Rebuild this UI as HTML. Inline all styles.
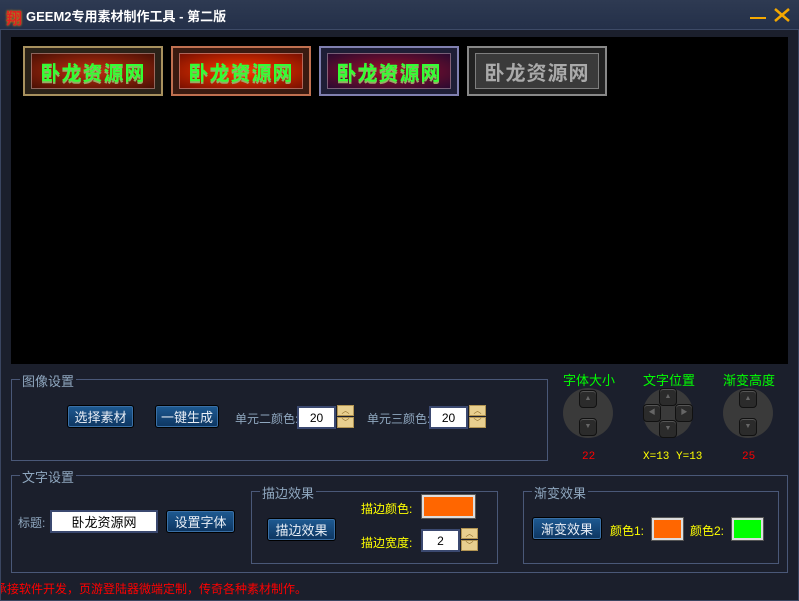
<!DOCTYPE html>
<html><head><meta charset="utf-8">
<style>
*{margin:0;padding:0;box-sizing:border-box}
body{width:799px;height:601px;overflow:hidden;background:#1b1f2c;font-family:"Liberation Sans","Noto Sans CJK SC","WenQuanYi Zen Hei",sans-serif;position:relative;font-size:12px}
.a{position:absolute}
#title{left:0;top:0;width:799px;height:30px;background:linear-gradient(#2e3a52,#243049);border-bottom:1px solid #3d4a66}
#frame{left:0;top:30px;width:799px;height:571px;border:1px solid #3a4560;border-top:none;background:#1b1f2c}
#canvas{left:11px;top:37px;width:777px;height:327px;background:#000}
.bn{width:140px;height:50px;border:2px solid;padding:5px 6px;}
.bn div{width:100%;height:100%;border:1px solid rgba(255,255,255,.35);display:flex;align-items:center;justify-content:center;font-size:20px;font-weight:bold;letter-spacing:1px}
.grp{border:1px solid #4a5878}
.lg{position:absolute;top:-9px;left:8px;background:#1b1f2c;color:#8fa7bf;padding:0 2px;font-size:13px}
.btn{height:23px;border:1px solid #000;border-radius:3px;background:linear-gradient(#1e5a92,#0d3560);color:#e8eef6;font-size:13px;display:flex;align-items:center;justify-content:center;box-shadow:inset 0 0 0 1px #3a6fa5}
.lbl{color:#8fa7bf;font-size:12px;white-space:nowrap}
.yl{color:#ffff00;font-size:12px;white-space:nowrap}
.inp{background:#fff;border:2px solid #3b4970;height:23px;display:flex;align-items:center;justify-content:center;color:#000;font-size:12px}
.sp{width:17px;height:23px}
.sp i{display:block;width:17px;height:11px;background:#e8cf8f;border:1px solid #b29452;margin-bottom:1px;color:#8b6a2a;font-size:8px;text-align:center;line-height:9px;font-style:normal}
.sw{border:2px solid #ddd;box-shadow:0 0 0 1px #555}
.dial{width:50px;height:50px;border-radius:50%;background:#3a3a3a}
.k{position:absolute;width:18px;height:18px;background:#2b2b2b;border:1px solid #111;border-radius:4px;box-shadow:inset 0 1px 0 #555;color:#666;font-size:7px;text-align:center;line-height:16px}
.gl{color:#00ff00;font-size:13px}
</style></head><body>
<div id="title" class="a">
 <div class="a" style="left:6px;top:5px;color:#d22;font-size:16px;font-weight:bold;text-shadow:0 0 2px #fa0">翔</div>
 <div class="a" style="left:26px;top:6px;color:#fff;font-size:13px;font-weight:bold">GEEM2专用素材制作工具 - 第二版</div>
 <div class="a" style="left:750px;top:17px;width:16px;height:2px;background:#f5a800"></div>
 <svg class="a" style="left:773px;top:7px" width="18" height="16"><path d="M2 2L16 14M16 2L2 14" stroke="#f5a800" stroke-width="2.5"/></svg>
</div>
<div id="frame" class="a"></div>
<div id="canvas" class="a"></div>
<div class="a bn" style="left:23px;top:46px;border-color:#a8915e;background:#2a2218"><div style="background:radial-gradient(#c03010,#4a1004);color:#3f3;text-shadow:0 2px 0 #9a6">卧龙资源网</div></div>
<div class="a bn" style="left:171px;top:46px;border-color:#c07050;background:#3a1a10"><div style="background:radial-gradient(#ff3a00,#7a1000);color:#3f3;text-shadow:0 2px 0 #9a6">卧龙资源网</div></div>
<div class="a bn" style="left:319px;top:46px;border-color:#8080b0;background:#1e1e36"><div style="background:radial-gradient(#a0102a,#2a0a30);color:#3f3;text-shadow:0 2px 0 #9a6">卧龙资源网</div></div>
<div class="a bn" style="left:467px;top:46px;border-color:#888;background:#222"><div style="background:#3a3a3a;color:#aaa">卧龙资源网</div></div>

<div class="a grp" style="left:11px;top:379px;width:537px;height:82px"><span class="lg">图像设置</span></div>
<div class="a btn" style="left:67px;top:405px;width:67px">选择素材</div>
<div class="a btn" style="left:155px;top:405px;width:64px">一键生成</div>
<div class="a lbl" style="left:235px;top:410px">单元二颜色:</div>
<div class="a inp" style="left:297px;top:406px;width:39px">20</div>
<div class="a sp" style="left:337px;top:405px"><i>︿</i><i>﹀</i></div>
<div class="a lbl" style="left:367px;top:410px">单元三颜色:</div>
<div class="a inp" style="left:429px;top:406px;width:39px">20</div>
<div class="a sp" style="left:469px;top:405px"><i>︿</i><i>﹀</i></div>

<div class="a gl" style="left:563px;top:370px">字体大小</div>
<div class="a gl" style="left:643px;top:370px">文字位置</div>
<div class="a gl" style="left:723px;top:370px">渐变高度</div>
<div class="a dial" style="left:563px;top:388px"><div class="k" style="left:16px;top:2px">▲</div><div class="k" style="left:16px;top:30px">▼</div></div>
<div class="a dial" style="left:643px;top:388px"><div class="k" style="left:16px;top:0px">▲</div><div class="k" style="left:16px;top:32px">▼</div><div class="k" style="left:0;top:16px">◀</div><div class="k" style="left:32px;top:16px">▶</div></div>
<div class="a dial" style="left:723px;top:388px"><div class="k" style="left:16px;top:2px">▲</div><div class="k" style="left:16px;top:30px">▼</div></div>
<div class="a" style="left:582px;top:451px;color:#f00;font-size:11px;font-family:'Liberation Mono',monospace">22</div>
<div class="a" style="left:643px;top:451px;color:#ff0;font-size:11px;font-family:'Liberation Mono',monospace">X=13 Y=13</div>
<div class="a" style="left:742px;top:451px;color:#f00;font-size:11px;font-family:'Liberation Mono',monospace">25</div>

<div class="a grp" style="left:11px;top:475px;width:777px;height:98px"><span class="lg">文字设置</span></div>
<div class="a lbl" style="left:18px;top:514px">标题:</div>
<div class="a inp" style="left:50px;top:510px;width:108px;font-size:13px">卧龙资源网</div>
<div class="a btn" style="left:166px;top:510px;width:69px">设置字体</div>
<div class="a grp" style="left:251px;top:491px;width:247px;height:73px"><span class="lg">描边效果</span></div>
<div class="a btn" style="left:267px;top:518px;width:69px">描边效果</div>
<div class="a yl" style="left:361px;top:500px">描边颜色:</div>
<div class="a sw" style="left:422px;top:495px;width:53px;height:23px;background:#ff6600"></div>
<div class="a yl" style="left:361px;top:534px">描边宽度:</div>
<div class="a inp" style="left:421px;top:529px;width:39px">2</div>
<div class="a sp" style="left:461px;top:528px"><i>︿</i><i>﹀</i></div>
<div class="a grp" style="left:523px;top:491px;width:256px;height:73px"><span class="lg">渐变效果</span></div>
<div class="a btn" style="left:532px;top:517px;width:70px">渐变效果</div>
<div class="a yl" style="left:610px;top:522px">颜色1:</div>
<div class="a sw" style="left:652px;top:518px;width:31px;height:22px;background:#ff6600"></div>
<div class="a yl" style="left:690px;top:522px">颜色2:</div>
<div class="a sw" style="left:732px;top:518px;width:31px;height:22px;background:#00ff00"></div>
<div class="a" style="left:1px;top:580px;width:500px;overflow:hidden;color:#f00;font-size:12px;white-space:nowrap"><span style="margin-left:-6px">承接软件开发，页游登陆器微端定制，传奇各种素材制作。</span></div>
</body></html>
